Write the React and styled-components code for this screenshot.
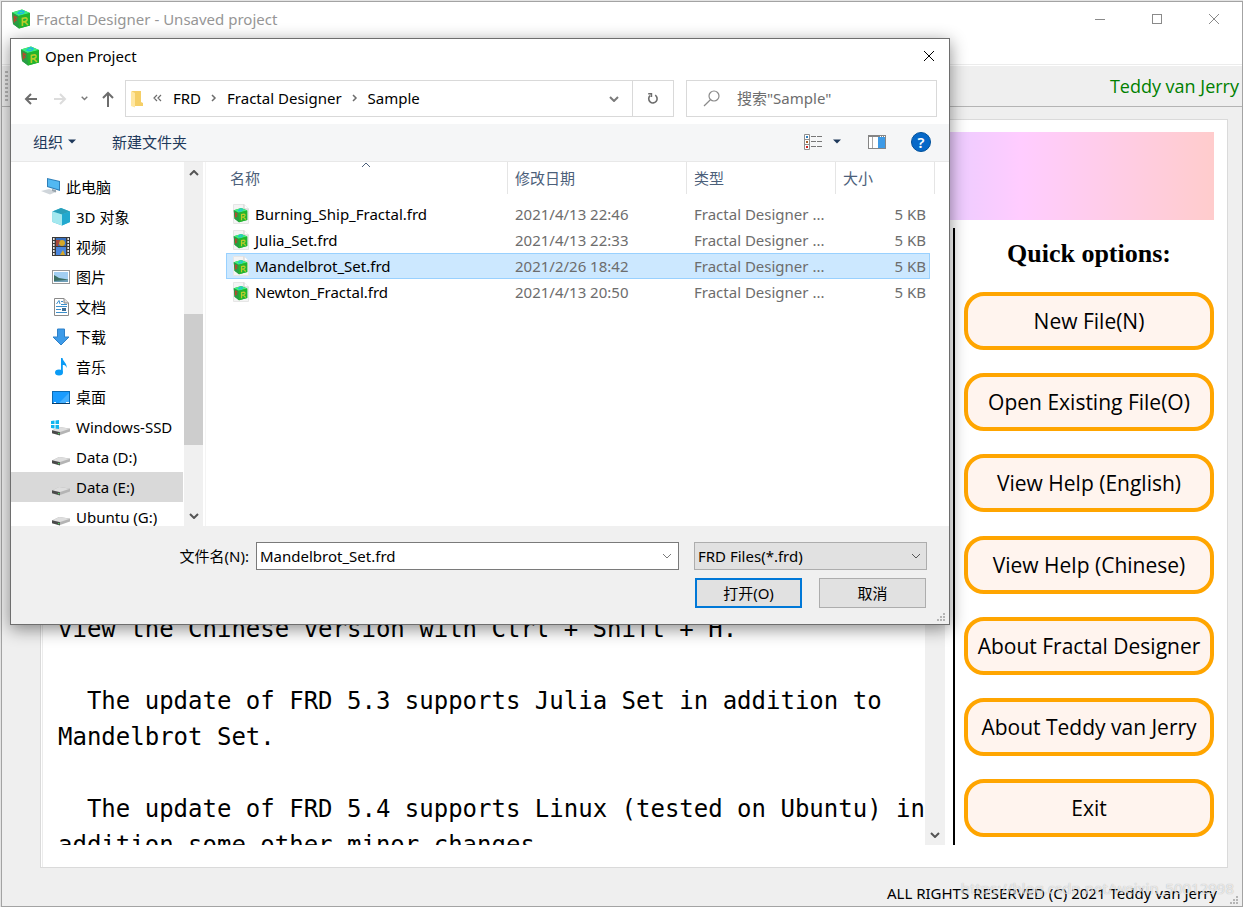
import React from "react";
import styled, { createGlobalStyle, css } from "styled-components";

const GlobalStyle = createGlobalStyle`
  *, *::before, *::after { box-sizing: border-box; }
  body {
    margin: 0;
    background: #e4e4e4;
    color: #000;
    font-family: "Noto Sans", "Noto Sans CJK SC", sans-serif;
    font-size: 15px;
    line-height: 20px;
  }
  button, input, select { font: inherit; color: inherit; margin: 0; }
  svg { display: block; flex: none; }
`;

/* ---------- main window ---------- */

const Desktop = styled.div`
  position: relative;
  height: 100vh;
  padding: 1px 0 0 1px;
  overflow: hidden;
`;

const MainWindow = styled.div`
  height: 100%;
  display: flex;
  flex-direction: column;
  background: #efefef;
  border: 1px solid #a3a3a3;
`;

const TitleBar = styled.header`
  display: flex;
  align-items: center;
  height: 36px;
  padding: 0 18px 2px 9px;
  gap: 5px;
  background: #fff;
  color: #969696;
`;

const WindowTitle = styled.h1`
  flex: 1;
  margin: 0;
  font-size: 15px;
  font-weight: 400;
`;

const WindowButtons = styled.div`
  display: flex;
  gap: 37px;
`;

const IconButton = styled.button`
  display: flex;
  align-items: center;
  justify-content: center;
  width: ${(p) => p.$width || 20}px;
  height: 24px;
  padding: 0;
  border: 0;
  background: transparent;
  color: ${(p) => p.$color || "#7a7a7a"};
`;

const MenuStrip = styled.div`
  height: 27px;
  background: #fff;
  border-bottom: 1px solid #ececec;
`;

const ToolStrip = styled.div`
  display: flex;
  align-items: center;
  justify-content: space-between;
  height: 42px;
  padding: 0 3px;
  border-top: 1px solid #fff;
  border-bottom: 1px solid #b4b4b4;
`;

const Grip = styled.div`
  width: 3px;
  height: 30px;
  background: repeating-linear-gradient(#b8b8b8 0 2px, transparent 2px 4px);
`;

const Author = styled.span`
  color: #008000;
  font-family: "Open Sans", sans-serif;
  font-size: 18px;
  line-height: 24px;
`;

const Panel = styled.main`
  flex: 1;
  min-height: 0;
  display: flex;
  flex-direction: column;
  gap: 8px;
  margin: 12px 14px 0 38px;
  padding: 12px 13px 22px;
  background: #fff;
  border: 1px solid #dadada;
  box-shadow: inset 1px 0 #fff, inset 2px 0 #ececec;
`;

const Banner = styled.div`
  flex: none;
  height: 88px;
  background: linear-gradient(90deg, #ffcccc, #ffffcc, #ccffcc, #ccffff, #ccccff, #ffccff, #ffcccc);
`;

const PanelBody = styled.div`
  flex: 1;
  min-height: 0;
  display: flex;
`;

const Reader = styled.article`
  flex: 1;
  min-width: 0;
  display: flex;
  flex-direction: column;
  justify-content: flex-end;
  overflow: hidden;
  padding-left: 4px;
`;

const ReaderText = styled.p`
  flex: none;
  margin: 0 0 36px;
  white-space: pre-wrap;
  font-family: "DejaVu Sans Mono", monospace;
  font-size: 24px;
  line-height: 36px;
  &:last-child { margin-bottom: -18px; }
`;

const ScrollTrack = styled.div`
  flex: none;
  width: ${(p) => p.$width}px;
  display: flex;
  flex-direction: column;
  align-items: stretch;
  background: #f0f0f0;
`;

const ScrollThumb = styled.div`
  height: 131px;
  margin-top: ${(p) => p.$top}px;
  margin-bottom: auto;
  background: #cdcdcd;
`;

const ScrollArrow = styled.button`
  display: flex;
  align-items: center;
  justify-content: center;
  height: 21px;
  padding: 0;
  border: 0;
  background: transparent;
  color: #555;
`;

const Divider = styled.div`
  width: 2px;
  margin: 0 9px 0 8px;
  background: #000;
`;

const QuickOptions = styled.section`
  flex: none;
  width: 250px;
  display: flex;
  flex-direction: column;
  justify-content: space-between;
  padding-bottom: 8px;
`;

const QuickHeading = styled.h2`
  margin: 0;
  padding: 11px 0 0;
  height: 41px;
  text-align: center;
  font-family: "Liberation Serif", serif;
  font-size: 26px;
  line-height: 30px;
`;

const QuickButton = styled.button`
  height: 58px;
  padding: 0;
  border: 4px solid #ffa500;
  border-radius: 20px;
  background: #fff4ee;
  font-family: "Open Sans", sans-serif;
  font-size: 21px;
  line-height: 28px;
`;

const StatusBar = styled.footer`
  position: relative;
  display: flex;
  align-items: flex-end;
  justify-content: flex-end;
  gap: 13px;
  height: 38px;
  padding: 0 4px 2px;
`;

const Copyright = styled.span`
  line-height: 22px;
`;

const Watermark = styled.span`
  position: absolute;
  right: 8px;
  top: 8px;
  font-size: 15px;
  line-height: 24px;
  color: rgba(255, 255, 255, 0.7);
  text-shadow: 0 0 1px rgba(0, 0, 0, 0.3);
`;

/* ---------- open dialog ---------- */

const Dialog = styled.div`
  position: absolute;
  left: 10px;
  right: 293px;
  top: 38px;
  background: #fff;
  border: 1px solid #6e6e6e;
  box-shadow: 0 4px 16px rgba(0, 0, 0, 0.45);
`;

const DialogTitle = styled.div`
  display: flex;
  align-items: center;
  gap: 5px;
  height: 36px;
  padding: 0 10px 2px 9px;
`;

const DialogName = styled.h2`
  flex: 1;
  margin: 0;
  font-size: 15px;
  font-weight: 400;
`;

const AddressRow = styled.div`
  display: flex;
  align-items: center;
  padding: 5px 12px 7px 10px;
`;

const NavButtons = styled.div`
  display: flex;
  align-items: center;
  gap: 9px;
  width: 104px;
`;

const AddressBox = styled.div`
  flex: 1;
  display: flex;
  align-items: center;
  height: 37px;
  margin-right: 12px;
  padding-left: 4px;
  border: 1px solid #d9d9d9;
`;

const Crumbs = styled.div`
  flex: 1;
  display: flex;
  align-items: center;
  gap: 10px;
  padding: 0 0 2px 9px;
`;

const Crumb = styled.a`
  color: #000;
  text-decoration: none;
`;

const RefreshCell = styled.div`
  display: flex;
  align-items: center;
  justify-content: center;
  align-self: stretch;
  width: 41px;
  margin-left: 8px;
  border-left: 1px solid #d9d9d9;
`;

const SearchBox = styled.label`
  display: flex;
  align-items: center;
  width: 251px;
  height: 37px;
  padding: 0 0 2px 16px;
  gap: 16px;
  border: 1px solid #d9d9d9;
`;

const SearchInput = styled.input`
  flex: 1;
  min-width: 0;
  padding: 0;
  border: 0;
  outline: 0;
  background: transparent;
  &::placeholder { color: #6d6d6d; opacity: 1; }
`;

const CommandBar = styled.div`
  display: flex;
  align-items: center;
  height: 38px;
  padding: 0 18px 2px 22px;
  background: #f5f6f7;
  border-bottom: 1px solid #e8e8e8;
  color: #1e395b;
`;

const CommandButton = styled.button`
  display: flex;
  align-items: center;
  gap: 5px;
  padding: 0;
  margin-right: 36px;
  border: 0;
  background: transparent;
`;

const CommandTools = styled.div`
  display: flex;
  align-items: center;
  margin-left: auto;
`;

const HelpButton = styled.button`
  width: 20px;
  height: 20px;
  margin-left: 8px;
  padding: 0;
  border: 1px solid #00509a;
  border-radius: 50%;
  background: #0668c8;
  color: #fff;
  font-size: 15px;
  font-weight: 600;
  line-height: 18px;
`;

const Browser = styled.div`
  display: flex;
  height: 364px;
`;

const Tree = styled.nav`
  width: 173px;
  overflow: hidden;
  padding-top: 10px;
`;

const TreeItem = styled.a`
  display: flex;
  align-items: center;
  gap: 5px;
  width: 172px;
  height: 30px;
  padding-left: ${(p) => (p.$root ? 30 : 40)}px;
  background: ${(p) => (p.$current ? "#d9d9d9" : "transparent")};
  color: #000;
  text-decoration: none;
  white-space: nowrap;
`;

const Files = styled.div`
  flex: 1;
  min-width: 0;
  margin-left: 2px;
  padding: 0 14px 0 20px;
  border-left: 1px solid #f4f4f4;
`;

const FileTable = styled.table`
  width: 100%;
  table-layout: fixed;
  border-collapse: separate;
  border-spacing: 0;
`;

const Col = styled.col`
  width: ${(p) => (p.$width ? p.$width + "px" : "auto")};
`;

const HeadCell = styled.th`
  position: relative;
  height: 39px;
  padding: 0 0 7px;
  text-align: left;
  vertical-align: top;
  font-weight: 400;
  color: #4c607a;
`;

const HeadLabel = styled.div`
  height: 32px;
  padding: 6px 0 0 ${(p) => p.$pad || 7}px;
  border-right: 1px solid ${(p) => (p.$plain ? "transparent" : "#e5e5e5")};
`;

const SortMark = styled.span`
  position: absolute;
  top: 0;
  left: 50%;
  margin-left: -6px;
`;

const Cell = styled.td`
  height: 26px;
  padding: 0 4px 0 7px;
  border: 0 solid transparent;
  border-width: 1px 0;
  color: ${(p) => (p.$name ? "#000" : "#6d6d6d")};
  text-align: ${(p) => (p.$right ? "right" : "left")};
  white-space: nowrap;
  ${(p) => p.$selected && css`
    background: #cce8ff;
    border-color: #99d1ff;
  `}
  ${(p) => p.$selected && p.$name && css`border-left-width: 1px; padding-left: 6px;`}
  ${(p) => p.$selected && p.$right && css`border-right-width: 1px; padding-right: 3px;`}
`;

const FileName = styled.span`
  display: flex;
  align-items: center;
  gap: 6px;
`;

const DialogFooter = styled.div`
  position: relative;
  padding: 16px 22px 16px 167px;
  background: #f0f0f0;
`;

const FieldRow = styled.div`
  display: flex;
  align-items: center;
`;

const FieldLabel = styled.label`
  width: 71px;
  margin-right: 7px;
  text-align: right;
  white-space: nowrap;
`;

const ComboBox = styled.div`
  flex: 1;
  display: flex;
  align-items: center;
  height: 28px;
  margin-right: 15px;
  padding: 0 1px 0 3px;
  border: 1px solid #7a7a7a;
  background: #fff;
`;

const ComboInput = styled.input`
  flex: 1;
  min-width: 0;
  padding: 0;
  border: 0;
  outline: 0;
  background: transparent;
`;

const SelectWrap = styled.div`
  position: relative;
  width: 233px;
  color: #555;
  svg { position: absolute; right: 6px; top: 11px; pointer-events: none; }
`;

const TypeSelect = styled.select`
  appearance: none;
  display: block;
  width: 100%;
  height: 28px;
  padding: 0 24px 0 3px;
  border: 1px solid #adadad;
  border-radius: 0;
  background: #e1e1e1;
  color: #000;
`;

const ActionRow = styled.div`
  display: flex;
  justify-content: flex-end;
  gap: 17px;
  margin-top: 8px;
  padding-right: 1px;
`;

const ActionButton = styled.button`
  width: 107px;
  height: 30px;
  padding: 0;
  border: ${(p) => (p.$primary ? "2px solid #0078d7" : "1px solid #adadad")};
  background: #e1e1e1;
`;

const CornerGrip = styled.span`
  position: absolute;
  right: 4px;
  bottom: 3px;
`;

/* ---------- icons ---------- */

const CubeShape = () => (
  <>
    <path d="M1 3.5 L11 0.5 L19 4 L19 16.5 L8 19.5 L2 15 Z" fill="#22b53c" />
    <path d="M1 3.5 L11 0.5 L19 4 L7.5 7 Z" fill="#3df07c" />
    <path d="M1 3.5 L7.5 7 L8 19.5 L2 15 Z" fill="#2a9c45" />
    <path d="M7.5 7 L19 4 L19 16.5 L8 19.5 Z" fill="#22b52e" />
    <path d="M7 4 L10 1.8 L13 2.6 Q13 4.6 9.5 4.8 Z" fill="none" stroke="#1fb4e6" strokeWidth="1.3" />
    <path d="M3.4 13.4 V7.6 L6 9 M3.4 10.5 L5.6 11.6" fill="none" stroke="#b8482e" strokeWidth="1.5" />
    <path d="M11.4 17 V9.4 L14.4 8.8 Q16.4 9 16 11 Q15.4 12.6 11.6 13 M13.8 12.8 L17 16" fill="none" stroke="#bccb2a" strokeWidth="1.6" />
  </>
);

const CubeIcon = () => (
  <svg width="20" height="20" viewBox="0 0 20 20"><CubeShape /></svg>
);

const FileIcon = () => (
  <svg width="16" height="20" viewBox="0 0 16 20">
    <path d="M0.5 0.5 H11 L15.5 5 V19.5 H0.5 Z" fill="#f4f4f4" stroke="#e6e6e6" />
    <path d="M11 0.5 V5 H15.5" fill="#fff" stroke="#ccc" />
    <svg x="0" y="3" width="15" height="16" viewBox="0 0 20 20"><CubeShape /></svg>
  </svg>
);

const Chevron = ({ dir = "down", size = 10, weight = 1 }) => (
  <svg width={size} height={size * 0.6} viewBox="0 0 10 6" fill="none" stroke="currentColor" strokeWidth={weight}>
    <path d={dir === "down" ? "M1 1 L5 5 L9 1" : "M1 5 L5 1 L9 5"} />
  </svg>
);

const CrumbArrow = () => (
  <svg width="6" height="8" viewBox="0 0 6 8" fill="none" stroke="#6d6d6d" strokeWidth="1.5"><path d="M1 1 L4 4 L1 7" /></svg>
);

const CloseIcon = () => (
  <svg width="12" height="12" viewBox="0 0 12 12" fill="none" stroke="currentColor"><path d="M1 1 L11 11 M11 1 L1 11" /></svg>
);

const Caret = () => (
  <svg width="8" height="5" viewBox="0 0 8 5"><path d="M0 0.5 H8 L4 4.5 Z" fill="#1e395b" /></svg>
);

const ArrowIcon = ({ d, color, w = 14 }) => (
  <svg width={w} height="16" viewBox={`0 0 ${w} 16`} fill="none" stroke={color} strokeWidth="2"><path d={d} /></svg>
);

const FolderIcon = () => (
  <svg width="14" height="18" viewBox="0 0 14 18">
    <path d="M2 1 H11 V12 L13 13 V16 H2 Z" fill="#f5cf67" />
    <path d="M1 1 L5 3 V17.5 L1 16 Z" fill="#ffe7a2" />
  </svg>
);

const RefreshIcon = () => (
  <svg width="12" height="13" viewBox="0 0 12 13" fill="none" stroke="#6d6d6d" strokeWidth="1.6">
    <path d="M8.2 3.2 A4.2 4.2 0 1 1 3 3.7" />
    <path d="M1.2 1.8 H4.4 V5" />
  </svg>
);

const SearchIcon = () => (
  <svg width="18" height="18" viewBox="0 0 18 18" fill="none" stroke="#8a8a8a" strokeWidth="1.2">
    <circle cx="11" cy="7" r="5" /><path d="M7.4 10.8 L1 17" />
  </svg>
);

const ListViewIcon = () => (
  <svg width="18" height="16" viewBox="0 0 18 16">
    <g fill="#fff" stroke="#8e8e8e"><path d="M0.5 0.5 H5.5 V15.5 H0.5 Z M0.5 5.5 H5.5 M0.5 10.5 H5.5" /></g>
    <rect x="2" y="2" width="2" height="2" fill="#2c7fc0" />
    <rect x="2" y="7" width="2" height="2" fill="#a8642c" />
    <rect x="2" y="12" width="2" height="2" fill="#d02020" />
    <path d="M7 2.5 H12 M13 2.5 H18 M7 7.5 H12 M13 7.5 H18 M7 12.5 H12 M13 12.5 H18" stroke="#777" />
  </svg>
);

const PaneIcon = () => (
  <svg width="18" height="14" viewBox="0 0 18 14">
    <rect x="0.5" y="0.5" width="17" height="13" fill="#fff" stroke="#858585" />
    <path d="M0 1 H18" stroke="#858585" strokeWidth="2" />
    <path d="M4.5 2 V13" stroke="#a9a9a9" />
    <rect x="10" y="2" width="7" height="11" fill="#3d9ae6" />
    <path d="M12 1.5 H17" stroke="#fff" strokeDasharray="1 1" />
  </svg>
);

const DotsIcon = () => (
  <svg width="8" height="8" viewBox="0 0 8 8" fill="#b5b5b5">
    <path d="M6 0h2v2H6z M3 3h2v2H3z M6 3h2v2H6z M0 6h2v2H0z M3 6h2v2H3z M6 6h2v2H6z" />
  </svg>
);

const Drive = () => (
  <>
    <path d="M1 13.4 L8 10 L19 11.6 V14.4 L9 18 L1 16 Z" fill="#b4b4b4" />
    <path d="M1 13.4 L8 10 L19 11.8 L9 15 Z" fill="#dedede" />
    <path d="M1 13.2 L9 15.2 V18.4 L1 16.2 Z" fill="#4a4a4a" />
    <rect x="7" y="16" width="1.4" height="1.2" fill="#4fd060" />
  </>
);

const treeDrawings = {
  pc: (
    <>
      <path d="M6 1 L19 4 V14 L6 10 Z" fill="#2f7fb8" />
      <path d="M7 2.2 L18 4.8 V12.4 L7 9.2 Z" fill="#52b8f2" />
      <path d="M0 14 L8 12 L16 14.5 L9 17.5 Z" fill="#cfd5da" />
      <path d="M11 12 L15 13 V15.5 L11 14 Z" fill="#98a4ac" />
    </>
  ),
  cube3d: (
    <>
      <path d="M1.5 4.5 L10 1 L19 4.5 V15 L11 18.5 L1.5 15 Z" fill="#3cc3d8" />
      <path d="M1.5 4.5 L10 1 L19 4.5 L11 7.5 Z" fill="#2a9fba" />
      <path d="M1.5 4.5 L11 7.5 V18.5 L1.5 15 Z" fill="#a4e8ef" />
      <path d="M11 7.5 L19 4.5 V15 L11 18.5 Z" fill="#22a9cf" />
    </>
  ),
  video: (
    <>
      <rect x="1" width="18" height="19" fill="#3a3a3a" />
      <path d="M2.8 1 V19 M17.2 1 V19" stroke="#e8e8e8" strokeWidth="1.6" strokeDasharray="2 1" />
      <rect x="5" y="1" width="10" height="8" fill="#386fbe" />
      <rect x="5" y="10" width="10" height="8" fill="#4a86dd" />
      <circle cx="11" cy="6" r="3" fill="#d5a829" />
      <path d="M5 3 H9 L7 9 H5 Z" fill="#a9463a" />
      <path d="M9 18 L12 13 L14 18 Z" fill="#d5a829" />
    </>
  ),
  picture: (
    <>
      <rect x="1.5" y="3.5" width="17" height="13" fill="#fff" stroke="#999" />
      <rect x="3" y="5" width="14" height="10" fill="#a3cff2" />
      <path d="M3 8 L8 11 L17 12.5 V15 H3 Z" fill="#3c6f63" />
      <path d="M3 14 L17 12.8 V15 H3 Z" fill="#6f9fb8" />
    </>
  ),
  doc: (
    <>
      <path d="M3.5 1.5 H13 L17.5 6 V18.5 H3.5 Z" fill="#fff" stroke="#8a8a8a" />
      <path d="M13 1.5 V6 H17.5" fill="#ddd" stroke="#8a8a8a" />
      <path d="M5.5 7 L8 3.5 L9 7 M10 4.5 H12 M10 7.5 H16 M5 9.5 H16 M5 12.5 H10 M5 15.5 H16" fill="none" stroke="#3b8fcc" />
      <rect x="11" y="11" width="4" height="3" fill="#3f6d94" />
    </>
  ),
  download: <path d="M6.5 2 H13.5 V10 H18 L10 18 L2 10 H6.5 Z" fill="#3d9be9" stroke="#2f80c8" />,
  music: (
    <>
      <ellipse cx="8" cy="15.5" rx="4" ry="3" fill="#0a9bf5" />
      <path d="M10 15 V1 H11.5 C12 5 16.5 6 15.5 11 C15 8.5 13.5 8 11.8 8 V15 Z" fill="#0a9bf5" />
    </>
  ),
  desktop: (
    <>
      <rect x="1.5" y="4.5" width="17" height="12" fill="#1a9cff" stroke="#0a6bb5" />
      <path d="M8 16 L18 6 V16 Z" fill="#45b0ff" />
      <path d="M1 16.5 H19" stroke="#063d6b" />
      <path d="M3 15.5 H5 M15 15.5 H18" stroke="#fff" />
    </>
  ),
  system: (
    <>
      <Drive />
      <path d="M0 4 L3.5 3.5 V7 H0 Z M4.5 3.4 L8 3 V7 H4.5 Z M0 8 H3.5 V11.4 L0 11 Z M4.5 8 H8 V12 L4.5 11.5 Z" fill="#12b5ef" />
    </>
  ),
  drive: <Drive />,
};

const TreeIcon = ({ kind }) => (
  <svg width="20" height="20" viewBox="0 0 20 20">{treeDrawings[kind]}</svg>
);

/* ---------- data ---------- */

const treeItems = [
  ["此电脑", "pc"],
  ["3D 对象", "cube3d"],
  ["视频", "video"],
  ["图片", "picture"],
  ["文档", "doc"],
  ["下载", "download"],
  ["音乐", "music"],
  ["桌面", "desktop"],
  ["Windows-SSD", "system"],
  ["Data (D:)", "drive"],
  ["Data (E:)", "drive"],
  ["Ubuntu (G:)", "drive"],
];

const files = [
  ["Burning_Ship_Fractal.frd", "2021/4/13 22:46"],
  ["Julia_Set.frd", "2021/4/13 22:33"],
  ["Mandelbrot_Set.frd", "2021/2/26 18:42"],
  ["Newton_Fractal.frd", "2021/4/13 20:50"],
];

const quickOptions = [
  "New File(N)",
  "Open Existing File(O)",
  "View Help (English)",
  "View Help (Chinese)",
  "About Fractal Designer",
  "About Teddy van Jerry",
  "Exit",
];

const notes = [
  "view the Chinese version with Ctrl + Shift + H.",
  "  The update of FRD 5.3 supports Julia Set in addition to Mandelbrot Set.",
  "  The update of FRD 5.4 supports Linux (tested on Ubuntu) in addition some other minor changes.",
];

/* ---------- views ---------- */

function OpenDialog() {
  const selected = "Mandelbrot_Set.frd";
  return (
    <Dialog role="dialog" aria-label="Open Project">
      <DialogTitle>
        <CubeIcon />
        <DialogName>Open Project</DialogName>
        <IconButton $color="#000" aria-label="Close"><CloseIcon /></IconButton>
      </DialogTitle>

      <AddressRow>
        <NavButtons>
          <IconButton aria-label="Back"><ArrowIcon d="M13 8 H2 M7 3 L2 8 L7 13" color="#6d6d6d" /></IconButton>
          <IconButton aria-label="Forward"><ArrowIcon d="M1 8 H12 M7 3 L12 8 L7 13" color="#dcdcdc" /></IconButton>
          <IconButton $width={10} aria-label="Recent"><Chevron size={7} weight={2} /></IconButton>
          <IconButton aria-label="Up"><ArrowIcon d="M7 16 V2 M2 7 L7 2 L12 7" color="#6d6d6d" /></IconButton>
        </NavButtons>
        <AddressBox>
          <FolderIcon />
          <Crumbs>
            <svg width="10" height="8" viewBox="0 0 10 8" fill="none" stroke="#6d6d6d" strokeWidth="1.2"><path d="M4 1 L1 4 L4 7 M8 1 L5 4 L8 7" /></svg>
            <Crumb href="#frd">FRD</Crumb>
            <CrumbArrow />
            <Crumb href="#designer">Fractal Designer</Crumb>
            <CrumbArrow />
            <Crumb href="#sample">Sample</Crumb>
          </Crumbs>
          <IconButton aria-label="Previous locations"><Chevron weight={2} /></IconButton>
          <RefreshCell><IconButton aria-label="Refresh"><RefreshIcon /></IconButton></RefreshCell>
        </AddressBox>
        <SearchBox>
          <SearchIcon />
          <SearchInput type="text" placeholder={'搜索"Sample"'} aria-label="搜索" />
        </SearchBox>
      </AddressRow>

      <CommandBar>
        <CommandButton>组织 <Caret /></CommandButton>
        <CommandButton>新建文件夹</CommandButton>
        <CommandTools>
          <IconButton aria-label="View"><ListViewIcon /></IconButton>
          <IconButton $width={28} aria-label="View options"><Caret /></IconButton>
          <IconButton $width={52} aria-label="Preview pane"><PaneIcon /></IconButton>
          <HelpButton aria-label="Help">?</HelpButton>
        </CommandTools>
      </CommandBar>

      <Browser>
        <Tree>
          {treeItems.map(([label, kind]) => (
            <TreeItem key={label} href={"#" + kind} $root={kind === "pc"} $current={label === "Data (E:)"}>
              <TreeIcon kind={kind} />
              {label}
            </TreeItem>
          ))}
        </Tree>
        <ScrollTrack $width={19}>
          <ScrollArrow aria-label="Scroll up"><Chevron dir="up" weight={2} /></ScrollArrow>
          <ScrollThumb $top={131} />
          <ScrollArrow aria-label="Scroll down"><Chevron weight={2} /></ScrollArrow>
        </ScrollTrack>
        <Files>
          <FileTable>
            <colgroup>
              <Col />
              <Col $width={179} />
              <Col $width={149} />
              <Col $width={94} />
              <Col $width={5} />
            </colgroup>
            <thead>
              <tr>
                <HeadCell>
                  <HeadLabel $pad={4}>名称</HeadLabel>
                  <SortMark><Chevron dir="up" /></SortMark>
                </HeadCell>
                <HeadCell><HeadLabel>修改日期</HeadLabel></HeadCell>
                <HeadCell><HeadLabel>类型</HeadLabel></HeadCell>
                <HeadCell><HeadLabel $plain>大小</HeadLabel></HeadCell>
                <HeadCell><HeadLabel $pad={1} /></HeadCell>
              </tr>
            </thead>
            <tbody>
              {files.map(([name, date]) => {
                const on = name === selected;
                return (
                  <tr key={name}>
                    <Cell $name $selected={on}><FileName><FileIcon />{name}</FileName></Cell>
                    <Cell $selected={on}>{date}</Cell>
                    <Cell $selected={on}>Fractal Designer ...</Cell>
                    <Cell $right $selected={on}>5 KB</Cell>
                  </tr>
                );
              })}
            </tbody>
          </FileTable>
        </Files>
      </Browser>

      <DialogFooter>
        <FieldRow>
          <FieldLabel htmlFor="file-name">文件名(N):</FieldLabel>
          <ComboBox>
            <ComboInput id="file-name" type="text" defaultValue={selected} />
            <IconButton aria-label="File name history"><Chevron /></IconButton>
          </ComboBox>
          <SelectWrap>
            <TypeSelect aria-label="File type"><option>FRD Files(*.frd)</option></TypeSelect>
            <Chevron />
          </SelectWrap>
        </FieldRow>
        <ActionRow>
          <ActionButton $primary>打开(O)</ActionButton>
          <ActionButton>取消</ActionButton>
        </ActionRow>
        <CornerGrip><DotsIcon /></CornerGrip>
      </DialogFooter>
    </Dialog>
  );
}

export default function App() {
  return (
    <Desktop>
      <GlobalStyle />
      <MainWindow>
        <TitleBar>
          <CubeIcon />
          <WindowTitle>Fractal Designer - Unsaved project</WindowTitle>
          <WindowButtons>
            <IconButton aria-label="Minimize"><svg width="10" height="1" viewBox="0 0 10 1"><path d="M0 0.5 H10" stroke="#8a8a8a" /></svg></IconButton>
            <IconButton aria-label="Maximize"><svg width="10" height="10" viewBox="0 0 10 10"><rect x="0.5" y="0.5" width="9" height="9" fill="none" stroke="#8a8a8a" /></svg></IconButton>
            <IconButton $color="#8a8a8a" aria-label="Close window"><CloseIcon /></IconButton>
          </WindowButtons>
        </TitleBar>
        <MenuStrip />
        <ToolStrip>
          <Grip />
          <Author>Teddy van Jerry</Author>
        </ToolStrip>
        <Panel>
          <Banner />
          <PanelBody>
            <Reader>
              {notes.map((note) => <ReaderText key={note}>{note}</ReaderText>)}
            </Reader>
            <ScrollTrack $width={20}>
              <ScrollThumb $top={21} />
              <ScrollArrow aria-label="Scroll text down"><Chevron weight={2} /></ScrollArrow>
            </ScrollTrack>
            <Divider />
            <QuickOptions>
              <QuickHeading>Quick options:</QuickHeading>
              {quickOptions.map((label) => <QuickButton key={label}>{label}</QuickButton>)}
            </QuickOptions>
          </PanelBody>
        </Panel>
        <StatusBar>
          <Copyright>ALL RIGHTS RESERVED (C) 2021 Teddy van Jerry</Copyright>
          <DotsIcon />
          <Watermark>https://blog.csdn.net/weixin_50012998</Watermark>
        </StatusBar>
      </MainWindow>
      <OpenDialog />
    </Desktop>
  );
}
